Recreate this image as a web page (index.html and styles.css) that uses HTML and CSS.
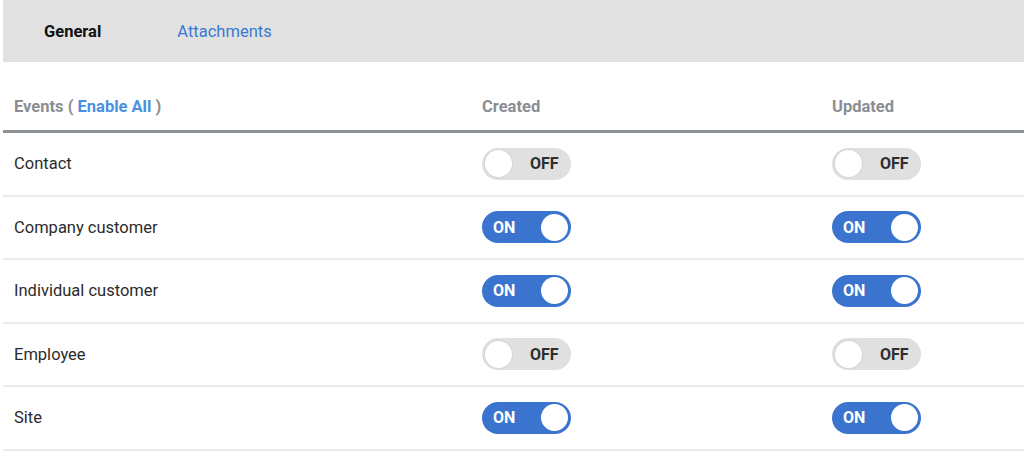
FILE: index.html
```html
<!DOCTYPE html>
<html lang="en">
<head>
  <meta charset="UTF-8" />
  <title>Webhook Events</title>
  <link rel="stylesheet" href="styles.css">
</head>
<body>

  <div class="panel">
    <nav class="tabs">
      <a class="tab active">General</a>
      <a class="tab">Attachments</a>
    </nav>

    <div class="events">
      <div class="row head">
        <div class="cell name">Events ( <a class="enable-all">Enable All</a> )</div>
        <div class="cell">Created</div>
        <div class="cell">Updated</div>
      </div>

      <div class="row">
        <div class="cell name">Contact</div>
        <div class="cell"><span class="switch">OFF</span></div>
        <div class="cell"><span class="switch">OFF</span></div>
      </div>

      <div class="row">
        <div class="cell name">Company customer</div>
        <div class="cell"><span class="switch on">ON</span></div>
        <div class="cell"><span class="switch on">ON</span></div>
      </div>

      <div class="row">
        <div class="cell name">Individual customer</div>
        <div class="cell"><span class="switch on">ON</span></div>
        <div class="cell"><span class="switch on">ON</span></div>
      </div>

      <div class="row">
        <div class="cell name">Employee</div>
        <div class="cell"><span class="switch">OFF</span></div>
        <div class="cell"><span class="switch">OFF</span></div>
      </div>

      <div class="row">
        <div class="cell name">Site</div>
        <div class="cell"><span class="switch on">ON</span></div>
        <div class="cell"><span class="switch on">ON</span></div>
      </div>
    </div>
  </div>

</body>
</html>
```

FILE: styles.css
```css
* {
  box-sizing: border-box;
  margin: 0;
  padding: 0;
}

body {
  background: #fff;
  color: #2b2b2b;
  font-family: Roboto, 'Liberation Sans', sans-serif;
  font-size: 16.5px;
  overflow: hidden;
}

.panel {
  margin-left: 3px;
}

/* Tab strip */
.tabs {
  display: flex;
  align-items: center;
  height: 62px;
  background: #e1e1e1;
  padding-left: 41px;
  gap: 76px;
}

.tab {
  color: #3b78d4;
  cursor: pointer;
}

.tab.active {
  color: #111;
  font-weight: 700;
}

/* Events grid */
.row {
  display: grid;
  grid-template-columns: 479px 350px 1fr;
  align-items: center;
  min-height: 63.5px;
  border-bottom: 2px solid #ebebeb;
}

.row.head {
  min-height: 71px;
  padding-top: 20px;
  border-bottom: 3px solid #8c9196;
  color: #8a8e93;
  font-weight: 700;
}

.name {
  padding-left: 11px;
}

.enable-all {
  color: #4a90e2;
  cursor: pointer;
}

/* Toggle switch */
.switch {
  position: relative;
  display: flex;
  align-items: center;
  width: 89px;
  height: 32px;
  border-radius: 16px;
  background: #e0e0e0;
  color: #2e2e2e;
  font-size: 16px;
  font-weight: 700;
  padding-left: 48px;
  cursor: pointer;
}

.switch::before {
  content: "";
  position: absolute;
  top: 2.5px;
  left: 3px;
  width: 27px;
  height: 27px;
  border-radius: 50%;
  background: #fff;
  box-shadow: 0 0 0 1px #d6d6d6;
}

.switch.on {
  background: #3b74cf;
  color: #fff;
  padding-left: 11px;
}

.switch.on::before {
  left: auto;
  right: 3px;
  box-shadow: none;
}
```
